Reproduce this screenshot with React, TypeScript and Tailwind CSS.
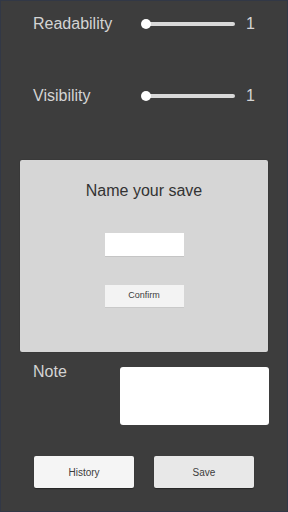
function SliderRow({ label, value, className }: { label: string; value: number; className?: string }) {
  return (
    <div className={`flex h-5 items-center pl-[32px] ${className ?? ""}`}>
      <span className="w-[108px] text-[16px] leading-5 text-[#d4d4d4]">{label}</span>
      <div className="relative flex h-[10px] w-[100px] items-center">
        <div className="ml-[5px] h-[4px] w-[89px] rounded-full bg-[#d9d9d9]" />
        <div className="absolute left-0 top-0 h-[10px] w-[10px] rounded-full bg-white" />
      </div>
      <span className="ml-[5px] text-[16px] leading-5 text-[#d4d4d4]">{value}</span>
    </div>
  );
}

export default function App() {
  return (
    <div className="h-[512px] w-[288px] overflow-hidden border border-[#323846] bg-[#3d3d3d] font-['Liberation_Sans',Arial,sans-serif]">
      <div className="pt-[13px]">
        <SliderRow label="Readability" value={1} />
        <SliderRow label="Visibility" value={1} className="mt-[52px]" />
      </div>

      <div className="ml-[19px] mt-[54px] flex h-[192px] w-[248px] flex-col items-center rounded-[2px] bg-[#d6d6d6] pt-[21px] shadow-[0_0_1px_rgba(0,0,0,0.5)]">
        <h1 className="text-[16px] leading-5 text-[#333333]">Name your save</h1>
        <input
          type="text"
          className="mt-[32px] h-[23px] w-[79px] bg-white shadow-[0_1px_0_rgba(0,0,0,0.08)] outline-none"
        />
        <button
          type="button"
          className="mt-[29px] h-[22px] w-[79px] bg-[#f3f3f3] text-[9px] text-[#3c3c3c] shadow-[0_1px_0_rgba(0,0,0,0.06)]"
        >
          Confirm
        </button>
      </div>

      <div className="mt-[10px] flex pl-[32px]">
        <span className="w-[87px] text-[16px] leading-5 text-[#d4d4d4]">Note</span>
        <textarea className="mt-[5px] h-[58px] w-[149px] resize-none rounded-[3px] bg-white outline-none" />
      </div>

      <div className="mt-[31px] flex gap-[20px] pl-[33px]">
        <button
          type="button"
          className="h-[32px] w-[100px] rounded-[2px] bg-[#f5f5f5] text-[10px] text-[#3c3c3c] shadow-[0_1px_1px_rgba(0,0,0,0.4)]"
        >
          History
        </button>
        <button
          type="button"
          className="h-[32px] w-[100px] rounded-[2px] bg-[#e8e8e8] text-[10px] text-[#3c3c3c] shadow-[0_1px_1px_rgba(0,0,0,0.4)]"
        >
          Save
        </button>
      </div>
    </div>
  );
}
